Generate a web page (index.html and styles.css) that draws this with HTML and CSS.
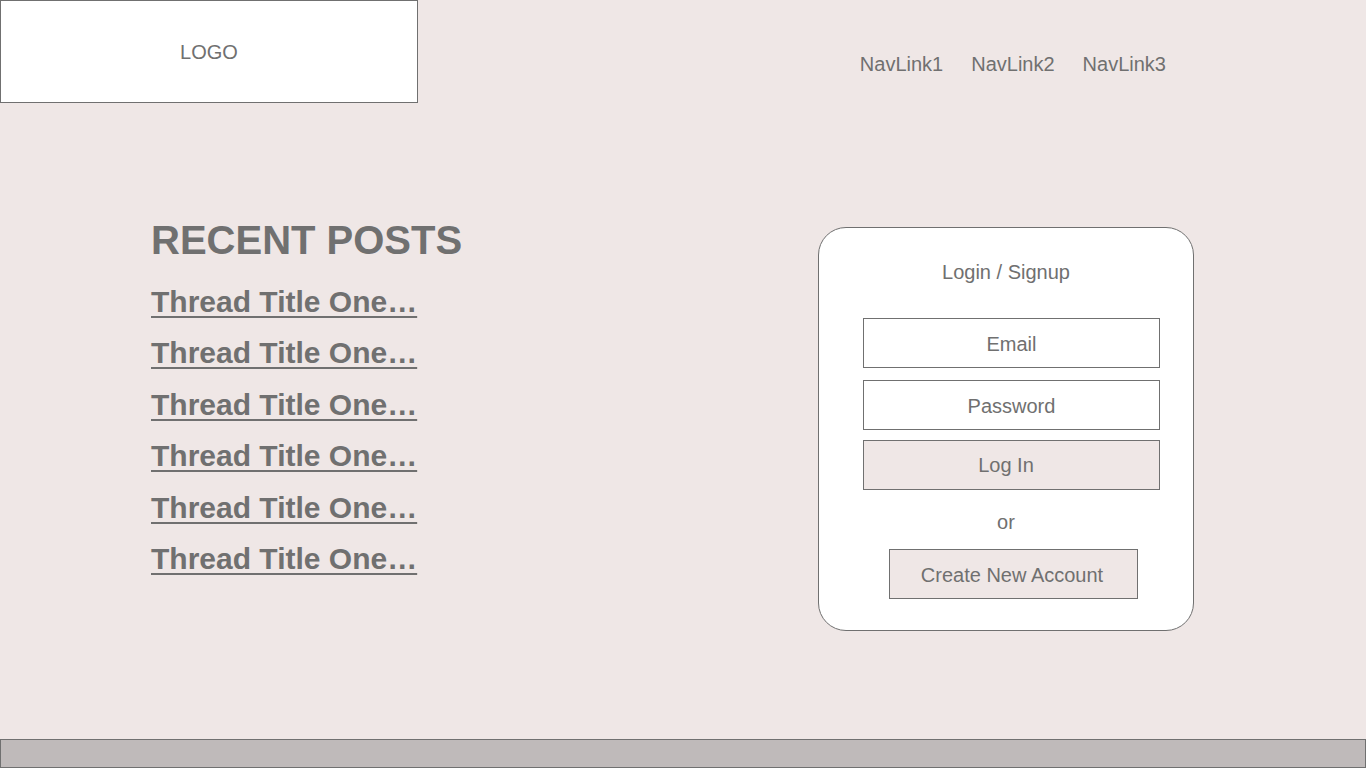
FILE: index.html
```html
<!DOCTYPE html>
<html lang="en">
<head>
<meta charset="utf-8">
<title>Forum</title>
<link rel="stylesheet" href="styles.css">
</head>
<body>
<div class="page">
  <header class="header">
    <div class="logo">LOGO</div>
    <nav class="nav">
      <a class="nav-link" href="#">NavLink1</a>
      <a class="nav-link" href="#">NavLink2</a>
      <a class="nav-link" href="#">NavLink3</a>
    </nav>
  </header>
  <main class="main">
    <section class="posts">
      <h1 class="posts-title">RECENT POSTS</h1>
      <ul class="post-list">
        <li><a class="post-link" href="#">Thread Title One…</a></li>
        <li><a class="post-link" href="#">Thread Title One…</a></li>
        <li><a class="post-link" href="#">Thread Title One…</a></li>
        <li><a class="post-link" href="#">Thread Title One…</a></li>
        <li><a class="post-link" href="#">Thread Title One…</a></li>
        <li><a class="post-link" href="#">Thread Title One…</a></li>
      </ul>
    </section>
    <section class="card">
      <div class="card-title">Login / Signup</div>
      <div class="field field-email">Email</div>
      <div class="field field-password">Password</div>
      <div class="btn btn-login">Log In</div>
      <div class="or">or</div>
      <div class="btn btn-create">Create New Account</div>
    </section>
  </main>
  <footer class="footer"></footer>
</div>
</body>
</html>
```
FILE: styles.css
```css
* { box-sizing: border-box; }
html, body { margin: 0; padding: 0; }
body {
  background: #efe7e6;
  color: #707070;
  font-family: "Liberation Sans", Arial, Helvetica, sans-serif;
  overflow: hidden;
}
.page {
  height: 768px;
  display: flex;
  flex-direction: column;
}
.header {
  display: flex;
  justify-content: space-between;
  align-items: flex-start;
  height: 103px;
}
.logo {
  width: 418px;
  height: 103px;
  background: #ffffff;
  border: 1px solid #707070;
  display: flex;
  align-items: center;
  justify-content: center;
  font-size: 20px;
  padding-top: 2px;
}
.nav {
  display: flex;
  gap: 28px;
  padding-top: 52px;
  padding-right: 200px;
}
.nav-link {
  color: #707070;
  text-decoration: none;
  font-size: 20px;
  line-height: 24px;
}
.main {
  display: flex;
  justify-content: space-between;
  align-items: flex-start;
  padding: 117px 172px 0 151px;
}
.posts-title {
  margin: 0;
  font-size: 40px;
  line-height: 40px;
  font-weight: bold;
}
.post-list {
  list-style: none;
  margin: 16px 0 0;
  padding: 0;
}
.post-list li {
  line-height: 51.4px;
  height: 51.4px;
}
.post-link {
  color: #707070;
  font-size: 30px;
  font-weight: bold;
  text-decoration: underline;
  text-decoration-thickness: 2px;
  text-underline-offset: 4px;
}
.card {
  margin-top: 7px;
  width: 376px;
  height: 404px;
  background: #ffffff;
  border: 1px solid #707070;
  border-radius: 28px;
  display: flex;
  flex-direction: column;
  padding-top: 32px;
}
.card-title {
  text-align: center;
  font-size: 20px;
  line-height: 24px;
  margin-bottom: 34px;
}
.field, .btn {
  display: flex;
  align-items: center;
  justify-content: center;
  font-size: 20px;
  border: 1px solid #707070;
  height: 50px;
  padding-top: 2px;
}
.field {
  background: #ffffff;
  width: 297px;
  margin-left: 44px;
}
.field-email { margin-bottom: 12px; }
.field-password { margin-bottom: 10px; }
.btn { background: #efe7e6; }
.btn-login {
  width: 297px;
  margin-left: 44px;
  padding-right: 11px;
  padding-top: 0;
}
.or {
  text-align: center;
  font-size: 20px;
  line-height: 24px;
  margin: 20px 0 15px;
}
.btn-create {
  width: 249px;
  margin-left: 70px;
  padding-right: 3px;
}
.footer {
  margin-top: auto;
  height: 29px;
  background: #bfbaba;
  border: 1px solid #707070;
}
```
